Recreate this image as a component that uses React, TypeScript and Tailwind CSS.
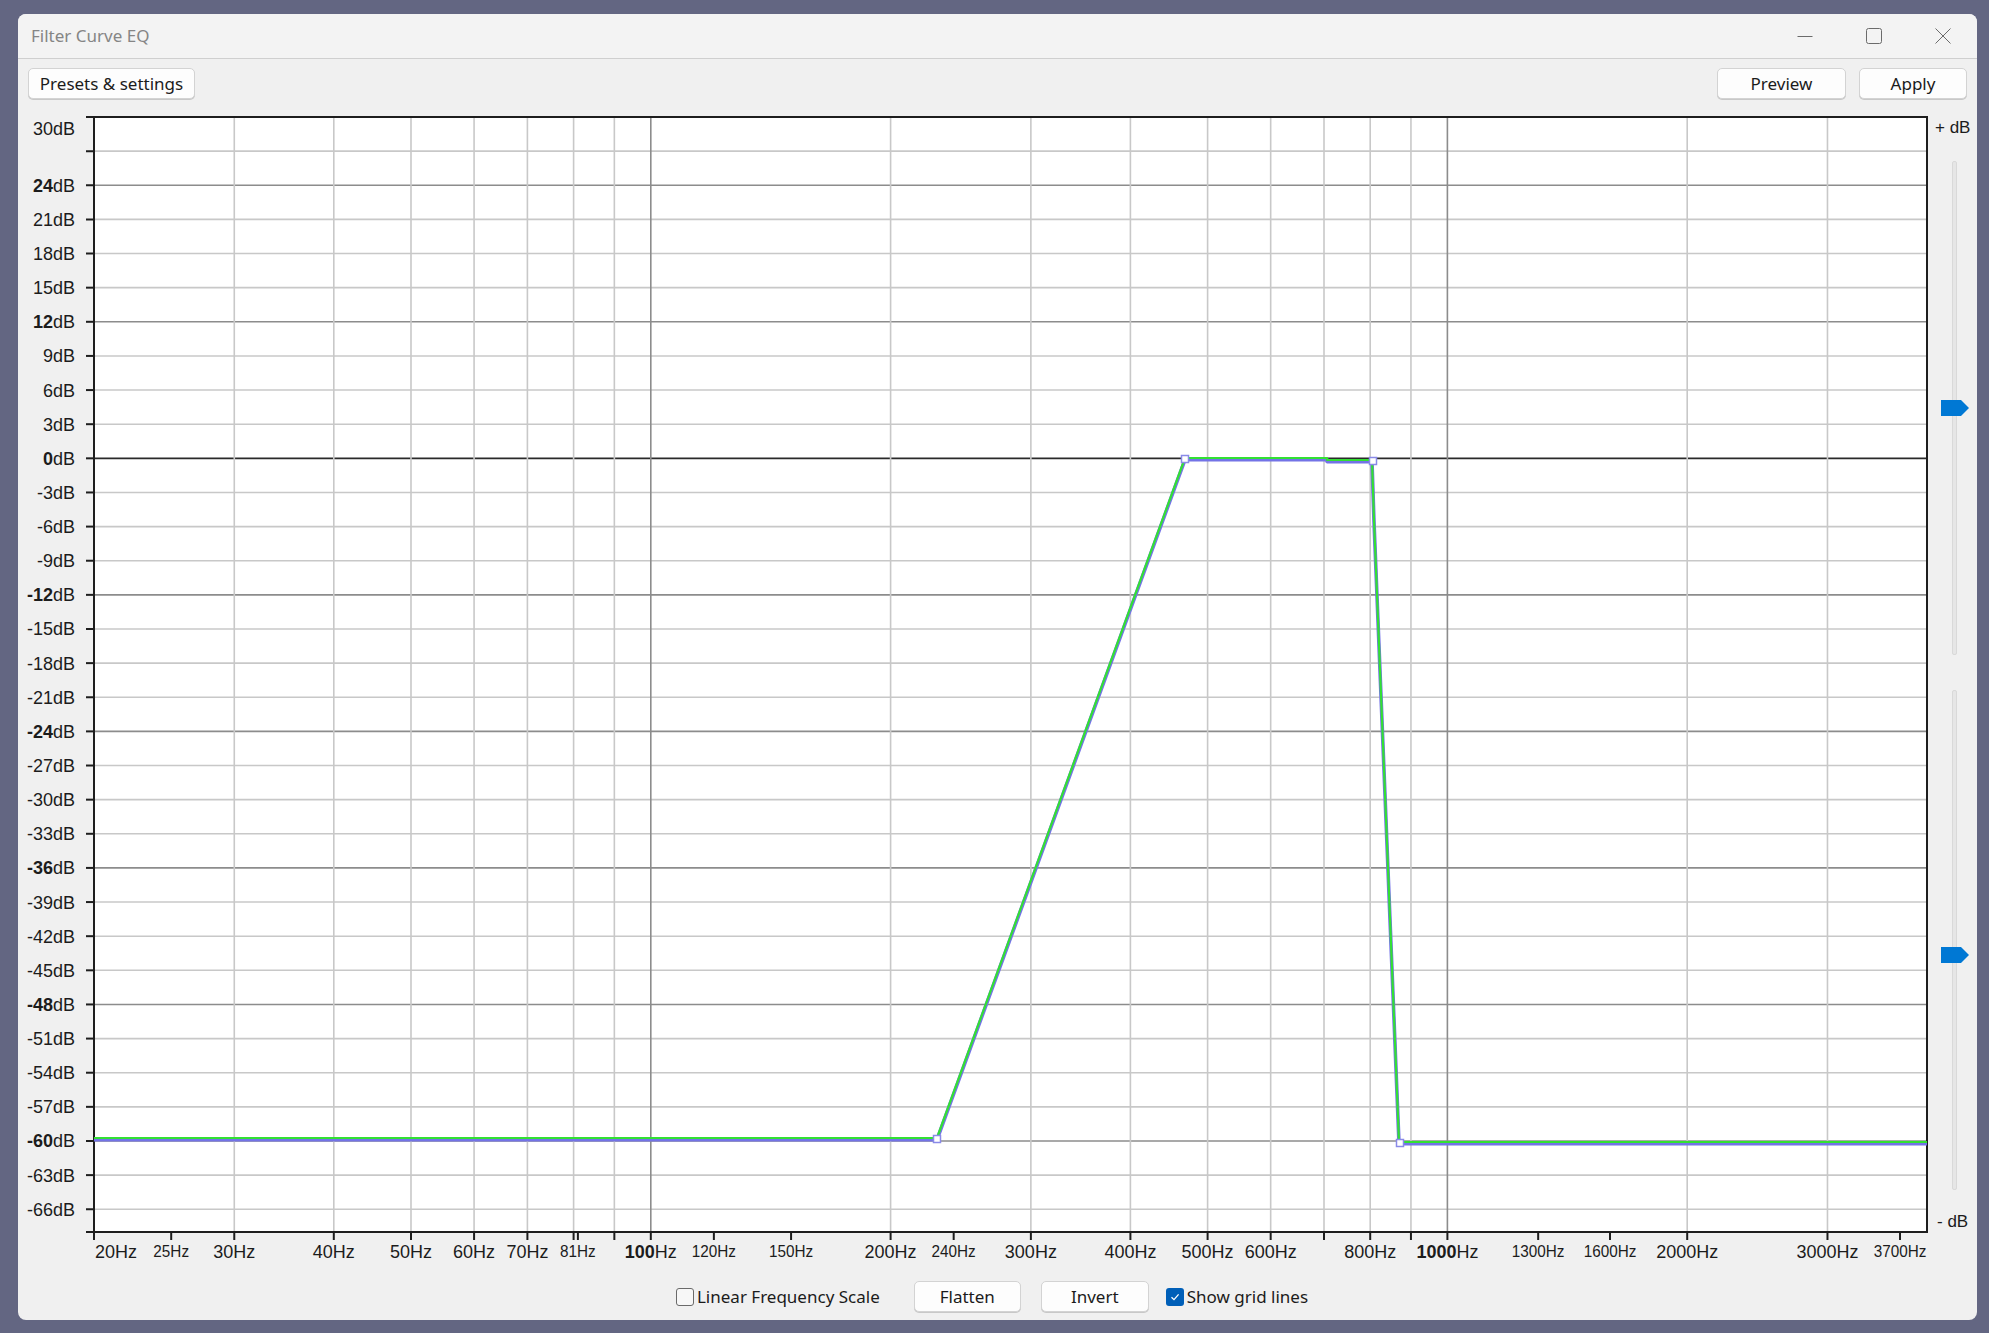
import React from "react";

const X0 = 94;
const X1 = 1927;
const Y0 = 117;
const Y1 = 1232;

const fx = (f: number) => X0 + ((X1 - X0) * Math.log10(f / 20)) / Math.log10(200);
const dy = (db: number) => Y0 + ((30 - db) * (Y1 - Y0)) / 98;

const dbRows: number[] = [];
for (let d = 27; d >= -66; d -= 3) dbRows.push(d);

const dbLabels: number[] = [];
for (let d = 30; d >= -66; d -= 3) if (d !== 27) dbLabels.push(d);

const vLines = [30, 40, 50, 60, 70, 80, 90, 100, 200, 300, 400, 500, 600, 700, 800, 900, 1000, 2000, 3000];

const hzLabels: { f: number; small?: boolean; bold?: boolean }[] = [
  { f: 20 },
  { f: 25, small: true },
  { f: 30 },
  { f: 40 },
  { f: 50 },
  { f: 60 },
  { f: 70 },
  { f: 81, small: true },
  { f: 100, bold: true },
  { f: 120, small: true },
  { f: 150, small: true },
  { f: 200 },
  { f: 240, small: true },
  { f: 300 },
  { f: 400 },
  { f: 500 },
  { f: 600 },
  { f: 800 },
  { f: 1000, bold: true },
  { f: 1300, small: true },
  { f: 1600, small: true },
  { f: 2000 },
  { f: 3000 },
  { f: 3700, small: true },
];

const extraTicks = [80, 90, 700, 900];

const curve: [number, number][] = [
  [X0, 1138],
  [937, 1138],
  [1185, 458],
  [1327, 458],
  [1327, 460],
  [1372, 460],
  [1374, 520],
  [1399, 1142],
  [X1, 1142],
];

const pts = (dx: number, dyy: number) => curve.map(([x, y]) => `${x + dx},${y + dyy}`).join(" ");

const handles: [number, number][] = [
  [937, 1139],
  [1185, 459],
  [1373, 461],
  [1400, 1143],
];

const FONT = "Liberation Sans, Arial, sans-serif";

// narrow labels are squeezed a little, like the reference's condensed face
const smallWidth = (f: number) => (String(f).length * 0.556 + 1.222) * 17 * 0.9;

function Chart() {
  return (
    <svg width={1912} height={1165} viewBox="18 100 1912 1165" className="block shrink-0">
      <rect x={X0} y={Y0} width={X1 - X0} height={Y1 - Y0} fill="#ffffff" />
      {dbRows.map((d) => (
        <line
          key={"h" + d}
          x1={X0}
          x2={X1}
          y1={dy(d)}
          y2={dy(d)}
          stroke={d === 0 ? "#2a2a2a" : d % 12 === 0 ? "#8c8c8c" : "#c8c8c8"}
          strokeWidth={d === 0 ? 1.8 : 1.6}
        />
      ))}
      {vLines.map((f) => (
        <line
          key={"v" + f}
          x1={fx(f)}
          x2={fx(f)}
          y1={Y0}
          y2={Y1}
          stroke={f === 100 || f === 1000 ? "#8c8c8c" : "#c8c8c8"}
          strokeWidth={1.6}
        />
      ))}
      <rect x={X0} y={Y0} width={X1 - X0} height={Y1 - Y0} fill="none" stroke="#1e1e1e" strokeWidth={2} />
      {[30, ...dbRows, -68].map((d) => (
        <line key={"t" + d} x1={86} x2={X0} y1={dy(d)} y2={dy(d)} stroke="#1e1e1e" strokeWidth={2} />
      ))}
      {[...hzLabels.map((h) => h.f), ...extraTicks].map((f) => (
        <line key={"xt" + f} x1={fx(f)} x2={fx(f)} y1={Y1} y2={Y1 + 8} stroke="#1e1e1e" strokeWidth={2} />
      ))}
      {dbLabels.map((d) => {
        const bold = d % 12 === 0;
        const y = d === 30 ? 135 : dy(d) + 6.5;
        return (
          <text key={"l" + d} x={75} y={y} textAnchor="end" fontSize={18} fontFamily={FONT} fill="#1c1c1c">
            <tspan fontWeight={bold ? 700 : 400}>{d}</tspan>dB
          </text>
        );
      })}
      {hzLabels.map((h) =>
        h.small ? (
          <text
            key={"x" + h.f}
            x={fx(h.f)}
            y={1257}
            textAnchor="middle"
            fontSize={17}
            fontFamily={FONT}
            fill="#1c1c1c"
            textLength={smallWidth(h.f)}
            lengthAdjust="spacingAndGlyphs"
          >
            {h.f}Hz
          </text>
        ) : (
          <text
            key={"x" + h.f}
            x={h.f === 20 ? 95 : fx(h.f)}
            y={1258}
            textAnchor={h.f === 20 ? "start" : "middle"}
            fontSize={18}
            fontFamily={FONT}
            fill="#1c1c1c"
          >
            <tspan fontWeight={h.bold ? 700 : 400}>{h.f}</tspan>Hz
          </text>
        )
      )}
      <polyline points={pts(0, 1.6)} fill="none" stroke="#7373e6" strokeWidth={3.6} strokeLinejoin="round" />
      <polyline points={pts(0, 0)} fill="none" stroke="#33e033" strokeWidth={2.2} strokeLinejoin="round" />
      {handles.map(([x, y]) => (
        <rect key={"p" + x} x={x - 3.5} y={y - 3.5} width={7} height={7} fill="#ffffff" stroke="#8a8ae8" strokeWidth={1.5} />
      ))}
    </svg>
  );
}

function Thumb() {
  return (
    <svg width={28} height={16} viewBox="0 0 28 16">
      <polygon points="0,0 20,0 28,8 20,16 0,16" fill="#0078d4" />
    </svg>
  );
}

function SliderColumn() {
  return (
    <div className="flex w-[47px] flex-col items-start font-['Liberation_Sans',sans-serif] text-[17px] text-[#1c1c1c]">
      <div className="mt-[18px] h-[20px] pl-[5px] leading-[20px]">+ dB</div>
      <div className="relative ml-[22px] mt-[23px] h-[494px] w-[5px] rounded-[2px] border border-[#d9d9d9] bg-[#e6e6e6]">
        <div className="absolute left-[-12px] top-[238px]">
          <Thumb />
        </div>
      </div>
      <div className="relative ml-[22px] mt-[35px] h-[500px] w-[5px] rounded-[2px] border border-[#d9d9d9] bg-[#e6e6e6]">
        <div className="absolute left-[-12px] top-[256px]">
          <Thumb />
        </div>
      </div>
      <div className="mt-[22px] h-[20px] pl-[7px] leading-[20px]">- dB</div>
    </div>
  );
}

function Btn({ children, w }: { children: React.ReactNode; w: string }) {
  return (
    <button
      className={`${w} h-[31px] rounded-[5px] border border-[#d3d3d3] bg-[#fdfdfd] text-[17px] text-[#1b1b1b] shadow-[0_1px_0_#c8c8c8]`}
    >
      {children}
    </button>
  );
}

function Check({ checked, label }: { checked: boolean; label: string }) {
  return (
    <div className="flex h-[31px] items-center gap-[3px]">
      {checked ? (
        <div className="flex h-[18px] w-[18px] items-center justify-center rounded-[3px] bg-[#005fb8]">
          <svg width={12} height={12} viewBox="0 0 12 12">
            <path d="M2.5 6.2 L5 8.6 L9.6 3.4" fill="none" stroke="#ffffff" strokeWidth={1.3} />
          </svg>
        </div>
      ) : (
        <div className="h-[18px] w-[18px] rounded-[3px] border border-[#6a6a6a] bg-[#f7f7f7]" />
      )}
      <span className="text-[17px] text-[#1b1b1b]">{label}</span>
    </div>
  );
}

export default function App() {
  return (
    <div className="h-[1333px] w-[1989px] bg-[#636682] pl-[18px] pt-[14px] font-['Noto_Sans',sans-serif]">
      <div className="flex h-[1306px] w-[1959px] flex-col overflow-hidden rounded-[8px] bg-[#f0f0f0]">
        <div className="flex h-[45px] shrink-0 items-center border-b border-[#cfcfcf] bg-[#f3f3f3]">
          <div className="flex-1 pl-[13px] text-[17px] text-[#858585]">Filter Curve EQ</div>
          <div className="flex h-full w-[69px] items-center justify-center">
            <svg width={16} height={16} viewBox="0 0 16 16">
              <line x1={0.5} x2={15.5} y1={8.5} y2={8.5} stroke="#6b6b6b" strokeWidth={1} />
            </svg>
          </div>
          <div className="flex h-full w-[69px] items-center justify-center">
            <svg width={16} height={16} viewBox="0 0 16 16">
              <rect x={0.5} y={0.5} width={15} height={15} rx={2} fill="none" stroke="#6b6b6b" strokeWidth={1} />
            </svg>
          </div>
          <div className="flex h-full w-[69px] items-center justify-center">
            <svg width={16} height={16} viewBox="0 0 16 16">
              <path d="M0.5 0.5 L15.5 15.5 M15.5 0.5 L0.5 15.5" stroke="#6b6b6b" strokeWidth={1} />
            </svg>
          </div>
        </div>
        <div className="flex h-[41px] shrink-0 items-start px-[10px] pt-[9px]">
          <Btn w="w-[167px]">Presets &amp; settings</Btn>
          <div className="flex-1" />
          <Btn w="w-[129px]">Preview</Btn>
          <div className="w-[13px]" />
          <Btn w="w-[108px]">Apply</Btn>
        </div>
        <div className="flex h-[1165px] shrink-0">
          <Chart />
          <SliderColumn />
        </div>
        <div className="flex h-[55px] shrink-0 items-start justify-center pr-[11px] pt-[16px]">
          <Check checked={false} label="Linear Frequency Scale" />
          <div className="w-[34px]" />
          <Btn w="w-[107px]">Flatten</Btn>
          <div className="w-[20px]" />
          <Btn w="w-[108px]">Invert</Btn>
          <div className="w-[17px]" />
          <Check checked label="Show grid lines" />
        </div>
      </div>
    </div>
  );
}
